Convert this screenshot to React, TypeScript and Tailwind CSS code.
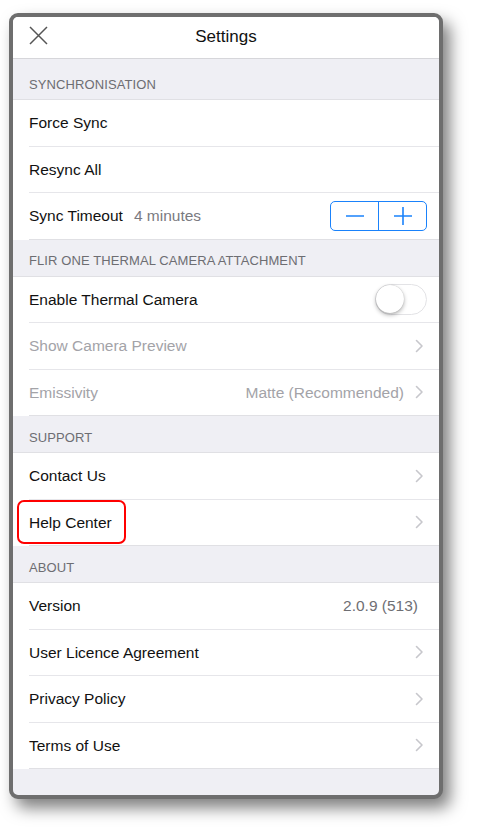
import { ReactNode } from "react";

const font = { fontFamily: '"Liberation Sans", Arial, sans-serif' };

function Chevron() {
  return (
    <svg width="9" height="14" viewBox="0 0 9 14" fill="none" aria-hidden="true">
      <path d="M1.5 1.5L7 7l-5.5 5.5" stroke="#c7c7cc" strokeWidth="1.6" strokeLinecap="round" strokeLinejoin="round" />
    </svg>
  );
}

function SectionHeader({ title, first }: { title: string; first?: boolean }) {
  return (
    <div
      className={`flex items-end border-b border-[#e0e0e4] bg-[#efeff4] px-4 pb-[5px] text-[13px] uppercase tracking-[0.1px] text-[#6d6d72] ${
        first ? "h-[42px] border-t border-t-[#d6d6da]" : "h-[37px]"
      }`}
    >
      {title}
    </div>
  );
}

function Row({
  label,
  value,
  chevron,
  disabled,
  last,
  right,
  labelExtra,
}: {
  label: ReactNode;
  value?: string;
  chevron?: boolean;
  disabled?: boolean;
  last?: boolean;
  right?: ReactNode;
  labelExtra?: string;
}) {
  return (
    <div className="bg-white pl-4">
      <div
        className={`flex h-[46.5px] items-center pr-3 ${
          last ? "border-b border-[#e0e0e4]" : "border-b border-[#e6e6ea]"
        }`}
      >
        <div className={`flex flex-1 items-center text-[15.5px] ${disabled ? "text-[#a3a3a8]" : "text-[#111]"}`}>
          {label}
          {labelExtra && <span className="ml-[11px] text-[#7a7a7f]">{labelExtra}</span>}
        </div>
        {value && (
          <span className={`text-[15.5px] ${disabled ? "text-[#a3a3a8]" : "text-[#6e6e73]"} ${chevron ? "mr-[11px]" : "mr-[9px]"}`}>
            {value}
          </span>
        )}
        {right}
        {chevron && (
          <span className="mr-[3px] flex items-center">
            <Chevron />
          </span>
        )}
      </div>
    </div>
  );
}

function Stepper() {
  return (
    <div className="flex h-[30px] w-[97px] overflow-hidden rounded-[5px] border border-[#1a82fb]">
      <div className="flex flex-1 items-center justify-center border-r border-[#1a82fb]">
        <svg width="20" height="20" viewBox="0 0 20 20" aria-hidden="true">
          <path d="M1 10h18" stroke="#1a82fb" strokeWidth="1.6" />
        </svg>
      </div>
      <div className="flex flex-1 items-center justify-center">
        <svg width="20" height="20" viewBox="0 0 20 20" aria-hidden="true">
          <path d="M1 10h18M10 1v18" stroke="#1a82fb" strokeWidth="1.6" />
        </svg>
      </div>
    </div>
  );
}

function Toggle() {
  return (
    <div className="relative h-[31px] w-[52px] rounded-full border-[1.5px] border-[#e3e3e6] bg-white">
      <div className="absolute left-0 top-0 h-[28px] w-[28px] rounded-full bg-white shadow-[0_2px_4px_rgba(0,0,0,0.3),0_0_1px_rgba(0,0,0,0.25)]" />
    </div>
  );
}

export default function App() {
  return (
    <div className="min-h-screen bg-white pl-[9px] pt-[13px]" style={font}>
      <div className="w-[434px] overflow-hidden rounded-[9px] border-[4px] border-[#6e6e6e] bg-[#efeff4] shadow-[7px_9px_16px_rgba(0,0,0,0.5)]">
        {/* Nav bar */}
        <div className="relative flex h-[41px] items-center justify-center bg-white">
          <svg className="absolute left-[16px] top-[9px]" width="19" height="19" viewBox="0 0 19 19" aria-hidden="true">
            <path d="M1 1l17 17M18 1L1 18" stroke="#555" strokeWidth="1.5" />
          </svg>
          <span className="-mt-[1px] text-[17px] text-[#111]">Settings</span>
        </div>

        <SectionHeader title="Synchronisation" first />
        <Row label="Force Sync" />
        <Row label="Resync All" />
        <Row label="Sync Timeout" labelExtra="4 minutes" right={<Stepper />} last />

        <SectionHeader title="FLIR One Thermal Camera Attachment" />
        <Row label="Enable Thermal Camera" right={<Toggle />} />
        <Row label="Show Camera Preview" chevron disabled />
        <Row label="Emissivity" value="Matte (Recommended)" chevron disabled last />

        <SectionHeader title="Support" />
        <Row label="Contact Us" chevron />
        <Row
          label={
            <span className="relative">
              Help Center
              <span className="absolute -left-[12px] -right-[14px] -top-[11px] -bottom-[10px] rounded-[7px] border-[2.5px] border-[#ff0000]" />
            </span>
          }
          chevron
          last
        />

        <SectionHeader title="About" />
        <Row label="Version" value="2.0.9 (513)" />
        <Row label="User Licence Agreement" chevron />
        <Row label="Privacy Policy" chevron />
        <Row label="Terms of Use" chevron last />

        <div className="h-[26px]" />
      </div>
    </div>
  );
}
